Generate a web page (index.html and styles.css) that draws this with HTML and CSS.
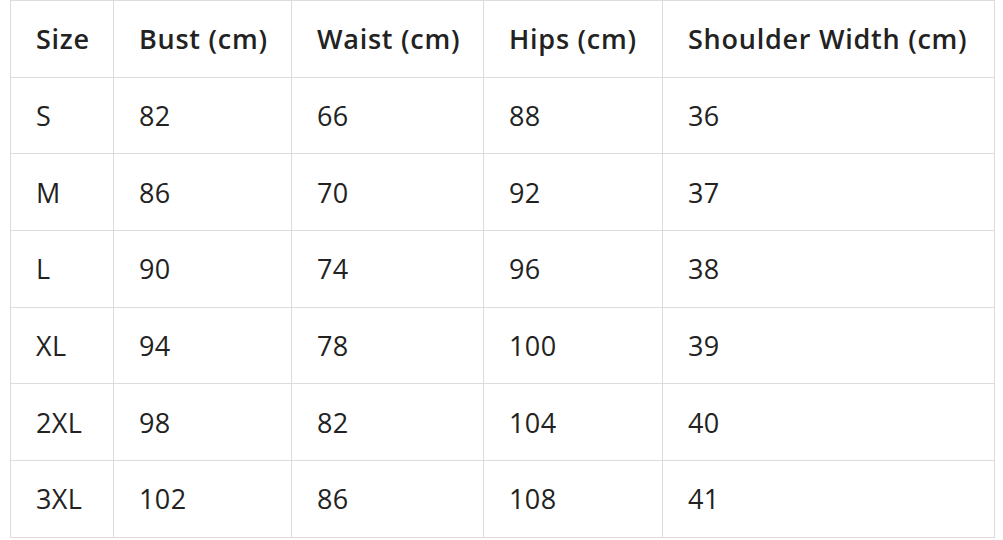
FILE: index.html
```html
<!DOCTYPE html>
<html>
<head>
<meta charset="utf-8">
<link rel="stylesheet" href="styles.css">
</head>
<body>
<table class="size-table">
  <colgroup>
    <col class="c1"><col class="c2"><col class="c3"><col class="c4"><col class="c5">
  </colgroup>
  <thead>
    <tr><th>Size</th><th>Bust (cm)</th><th>Waist (cm)</th><th>Hips (cm)</th><th>Shoulder Width (cm)</th></tr>
  </thead>
  <tbody>
    <tr><td>S</td><td>82</td><td>66</td><td>88</td><td>36</td></tr>
    <tr><td>M</td><td>86</td><td>70</td><td>92</td><td>37</td></tr>
    <tr><td>L</td><td>90</td><td>74</td><td>96</td><td>38</td></tr>
    <tr><td>XL</td><td>94</td><td>78</td><td>100</td><td>39</td></tr>
    <tr><td>2XL</td><td>98</td><td>82</td><td>104</td><td>40</td></tr>
    <tr><td>3XL</td><td>102</td><td>86</td><td>108</td><td>41</td></tr>
  </tbody>
</table>
</body>
</html>
```
FILE: styles.css
```css
html, body {
  margin: 0;
  padding: 0;
  background: #fff;
}
body {
  padding: 0 0 0 10px;
  font-family: "Open Sans", "Noto Sans", sans-serif;
  color: #222;
}
.size-table {
  border-collapse: collapse;
  table-layout: fixed;
  width: 984px;
}
.c1 { width: 103px; }
.c2 { width: 178px; }
.c3 { width: 192px; }
.c4 { width: 179px; }
.c5 { width: 332px; }
.size-table th,
.size-table td {
  border: 1px solid #dcdcdc;
  height: 76.7px;
  box-sizing: border-box;
  padding: 0 0 0 25px;
  text-align: left;
  font-size: 27px;
  letter-spacing: 0.4px;
  white-space: nowrap;
}
.size-table th {
  font-weight: 600;
  letter-spacing: 0.75px;
}
.size-table td {
  font-weight: 400;
}
```
